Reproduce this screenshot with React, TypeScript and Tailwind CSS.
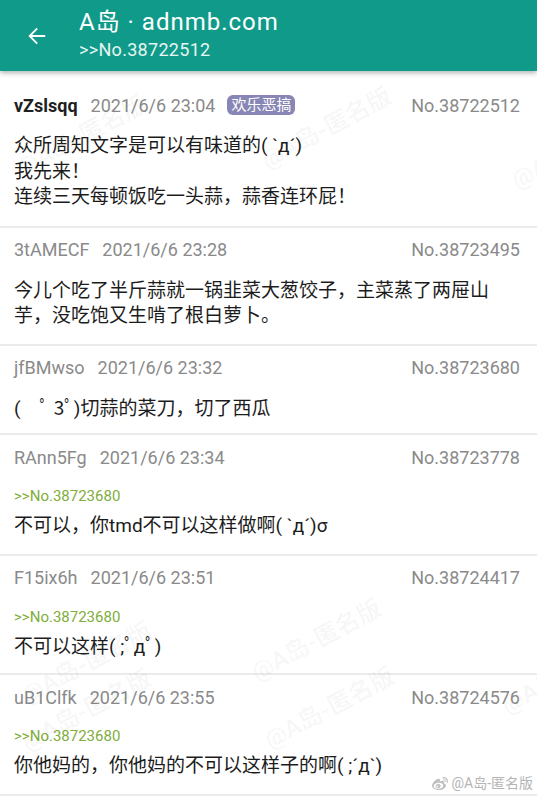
import React from "react";
import { FaWeibo } from "react-icons/fa";

const FONT = { fontFamily: 'Roboto, "Noto Sans CJK SC", sans-serif' };

type Post = {
  user: string;
  po?: boolean;
  time: string;
  no: string;
  badge?: string;
  ref?: string;
  lines: string[];
  pb: string;
};

const posts: Post[] = [
  {
    user: "vZslsqq",
    po: true,
    time: "2021/6/6 23:04",
    no: "No.38722512",
    badge: "欢乐恶搞",
    lines: ["众所周知文字是可以有味道的( `д´)", "我先来！", "连续三天每顿饭吃一头蒜，蒜香连环屁！"],
    pb: "pb-[16px]",
  },
  {
    user: "3tAMECF",
    time: "2021/6/6 23:28",
    no: "No.38723495",
    lines: ["今儿个吃了半斤蒜就一锅韭菜大葱饺子，主菜蒸了两屉山", "芋，没吃饱又生啃了根白萝卜。"],
    pb: "pb-[15px]",
  },
  {
    user: "jfBMwso",
    time: "2021/6/6 23:32",
    no: "No.38723680",
    lines: ["(\u3000ﾟ 3ﾟ)切蒜的菜刀，切了西瓜"],
    pb: "pb-[12px]",
  },
  {
    user: "RAnn5Fg",
    time: "2021/6/6 23:34",
    no: "No.38723778",
    ref: ">>No.38723680",
    lines: ["不可以，你tmd不可以这样做啊( `д´)σ"],
    pb: "pb-[15px]",
  },
  {
    user: "F15ix6h",
    time: "2021/6/6 23:51",
    no: "No.38724417",
    ref: ">>No.38723680",
    lines: ["不可以这样( ;ﾟдﾟ)"],
    pb: "pb-[14px]",
  },
  {
    user: "uB1Clfk",
    time: "2021/6/6 23:55",
    no: "No.38724576",
    ref: ">>No.38723680",
    lines: ["你他妈的，你他妈的不可以这样子的啊( ;´д`)"],
    pb: "pb-[15px]",
  },
];

function PostCard({ p }: { p: Post }) {
  return (
    <div className={`bg-white border-b-2 border-[#ebebeb] pl-[14px] pr-[17px] pt-[10px] ${p.pb}`}>
      <div className="flex items-center h-[24px] text-[18px] text-[#8a8a8a]">
        <span className={p.po ? "font-bold text-[#1f1f1f]" : ""}>{p.user}</span>
        <span className="ml-[13px]">{p.time}</span>
        {p.badge && (
          <span className="ml-[12px] h-[20px] px-[4px] rounded-[6px] bg-[#8886b4] text-white text-[15px] leading-[20px]">
            {p.badge}
          </span>
        )}
        <span className="ml-auto">{p.no}</span>
      </div>
      {p.ref && <div className="mt-[17px] text-[15px] leading-[20px] text-[#80ad3c]">{p.ref}</div>}
      <div className={`${p.ref ? "mt-[7px]" : "mt-[16px]"} text-[19px] leading-[25.5px] text-[#1c1c1c]`}>
        {p.lines.map((l, i) => (
          <div key={i} className="whitespace-pre">{l}</div>
        ))}
      </div>
    </div>
  );
}

const marks: { x: number; y: number }[] = [
  { x: 10, y: 118 },
  { x: 255, y: 110 },
  { x: 505, y: 130 },
  { x: 245, y: 622 },
  { x: 15, y: 645 },
  { x: 495, y: 655 },
  { x: 15, y: 692 },
  { x: 258, y: 690 },
];

export default function App() {
  return (
    <div className="relative w-[537px] h-[800px] overflow-hidden bg-white" style={FONT}>
      <div className="relative z-10 h-[71px] bg-[#0f9a89] shadow-[0_2px_5px_rgba(0,0,0,0.3)] flex items-center">
        <svg width="22" height="22" viewBox="0 0 24 24" className="ml-[26px]" fill="none" stroke="white" strokeWidth="2" strokeLinecap="square">
          <path d="M20 12H4.5M11.5 4.5 4 12l7.5 7.5" />
        </svg>
        <div className="ml-[31px] flex flex-col">
          <div className="text-white text-[24px] leading-[28px] -mt-[3px] tracking-[1px]">A岛 · adnmb.com</div>
          <div className="text-white/90 text-[18px] leading-[20px] mt-[4px] tracking-[0.3px]">&gt;&gt;No.38722512</div>
        </div>
      </div>
      <div className="pt-[12px]">
        {posts.map((p) => (
          <PostCard key={p.no} p={p} />
        ))}
      </div>
      {marks.map((m, i) => (
        <div
          key={i}
          className="absolute text-[24px] font-bold text-black/[0.04] whitespace-nowrap -rotate-[28deg] pointer-events-none"
          style={{ left: m.x, top: m.y }}
        >
          @A岛-匿名版
        </div>
      ))}
      <div className="absolute right-[4px] top-[773px] flex items-center gap-[3px] text-[14px] text-[#b5b5b5]">
        <FaWeibo className="text-[16px] text-[#c0c0c0]" />
        <span>@A岛-匿名版</span>
      </div>
    </div>
  );
}
